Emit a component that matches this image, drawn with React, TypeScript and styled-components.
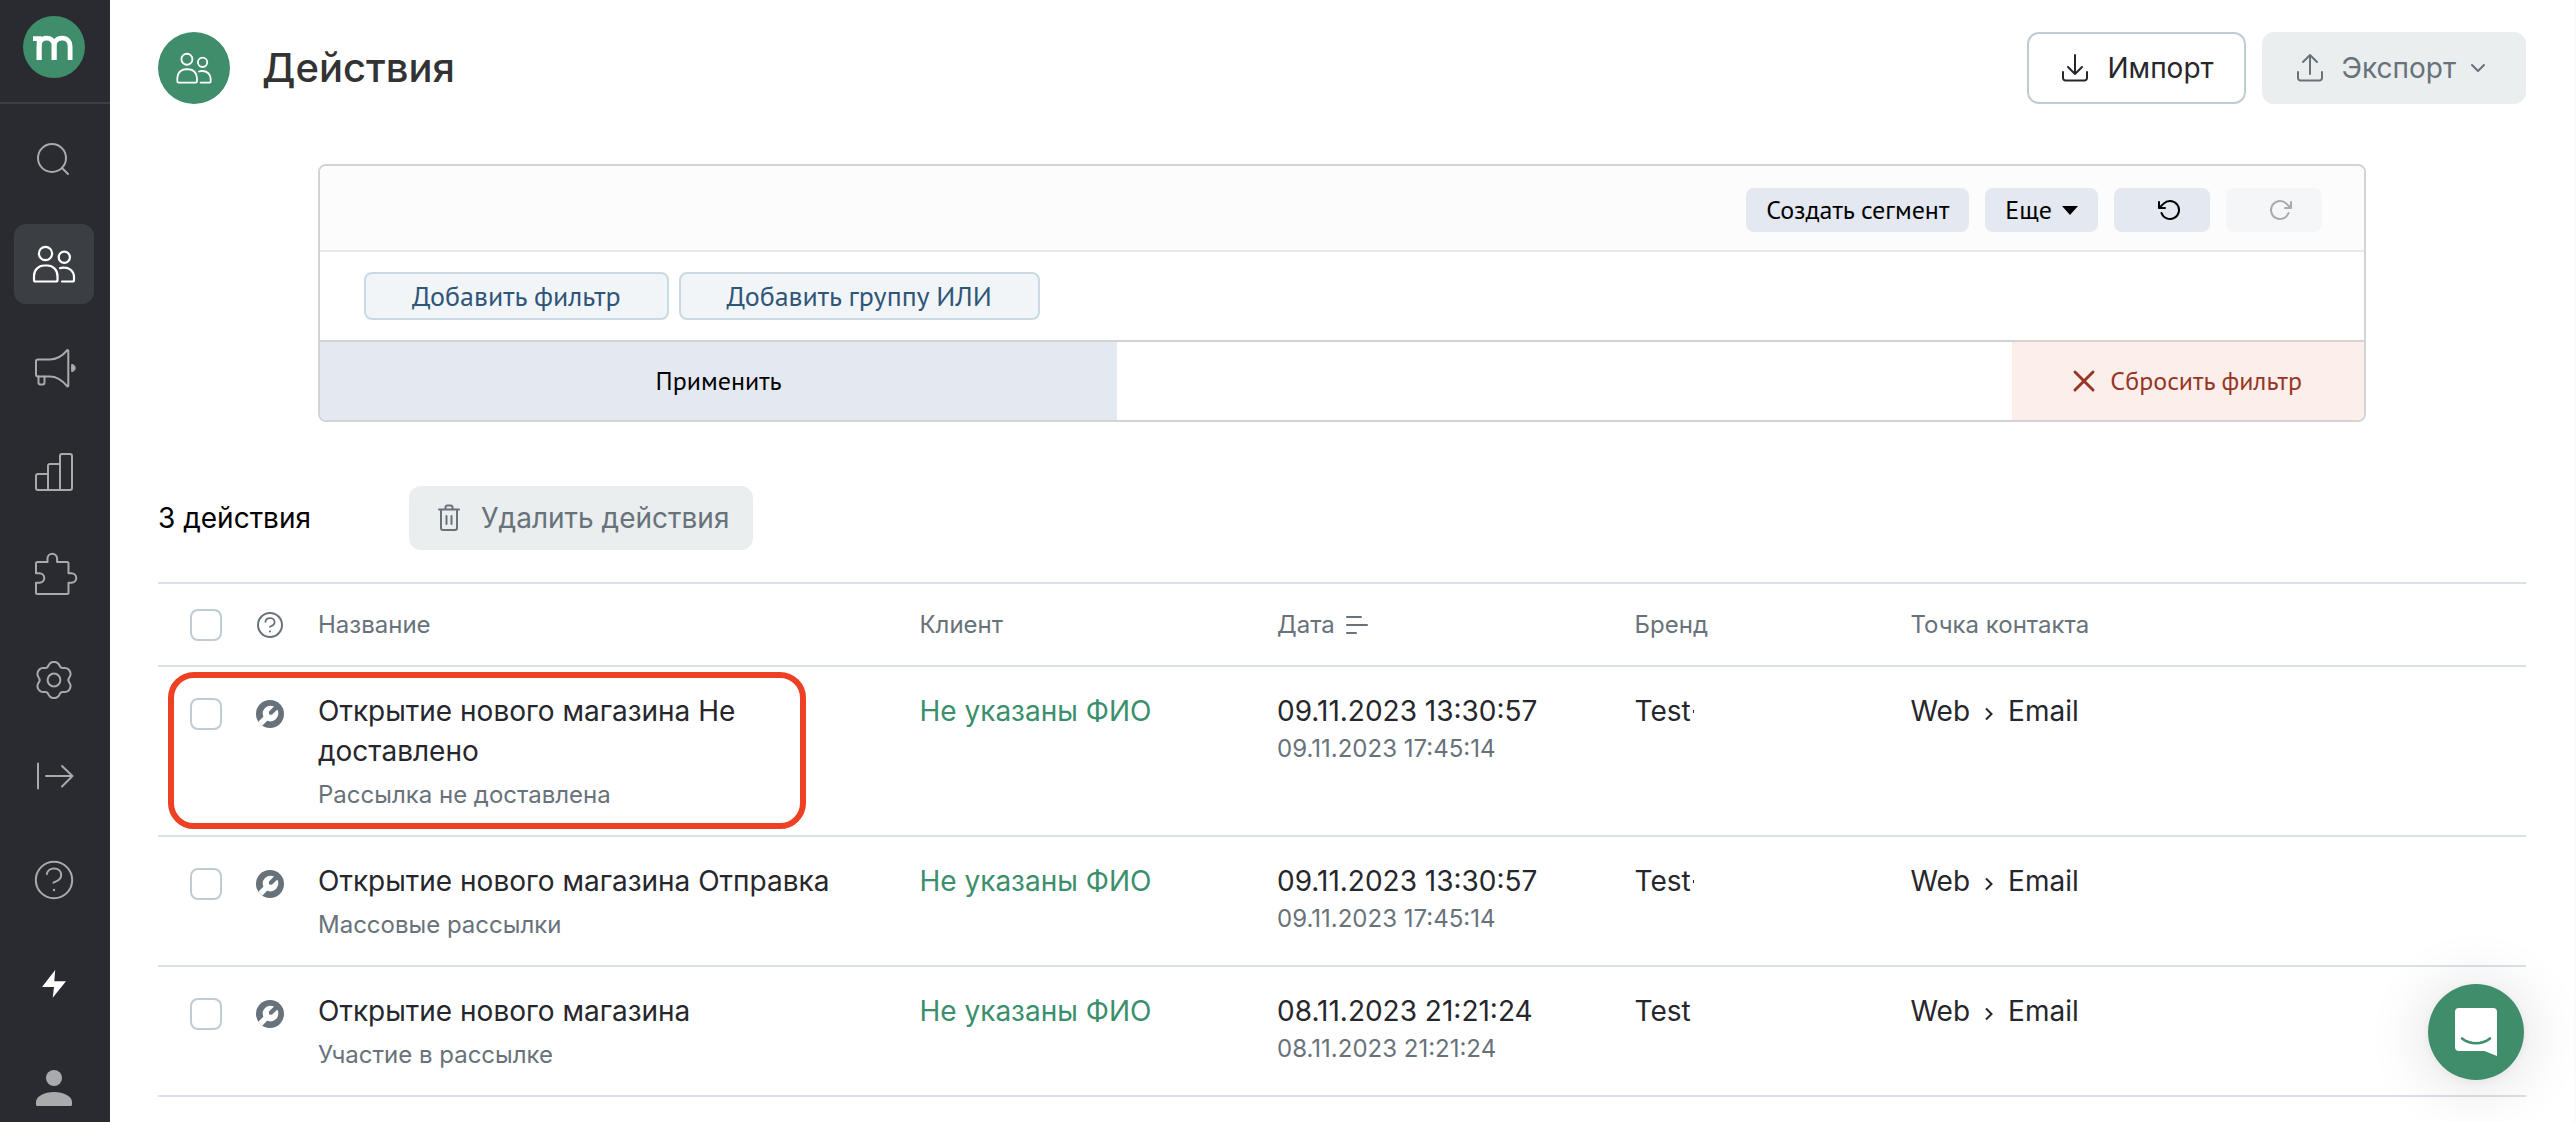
import React from "react";
import styled, { createGlobalStyle, css } from "styled-components";

const color = {
  green: "#408d6c",
  dark: "#2a2b30",
  darkActive: "#3b3e43",
  ink: "#26272c",
  muted: "#68727a",
  line: "#dbe1e6",
  control: "#c0ccd4",
  disabled: "#eaeeef",
  panelLine: "#d3d3d3",
  panelButton: "#e4e8f0",
};

const inter = `Inter, "Liberation Sans", sans-serif`;
const ptSans = `"PT Sans", "Noto Sans", sans-serif`;

const GlobalStyle = createGlobalStyle`
  *, *::before, *::after { box-sizing: border-box; }
  body {
    margin: 0;
    background: #fff;
    color: ${color.ink};
    font-family: ${inter};
    font-size: 28px;
    line-height: 40px;
  }
  button { font: inherit; margin: 0; cursor: pointer; }
  button:disabled { cursor: default; }
  svg { display: block; flex: none; }
`;

const Layout = styled.div`
  display: flex;
  height: 100vh;
  overflow: hidden;
`;

/* ---------- sidebar ---------- */

const Sidebar = styled.aside`
  flex: none;
  width: 110px;
  height: 100%;
  overflow: hidden;
  background: ${color.dark};
`;

const LogoArea = styled.div`
  padding: 16px 24px 24px 23px;
  border-bottom: 2px solid ${color.darkActive};
`;

const NavGroup = styled.nav`
  display: flex;
  flex-direction: column;
  gap: 24px;
  padding: 16px 16px 0 14px;
`;

const NavButton = styled.button<{ $active?: boolean; $bright?: boolean }>`
  display: flex;
  align-items: center;
  justify-content: center;
  width: 80px;
  height: 80px;
  padding: 0;
  border: 0;
  border-radius: 12px;
  background: ${(p) => (p.$active ? color.darkActive : "transparent")};
  color: ${(p) => (p.$active || p.$bright ? "#fff" : "#a9aaac")};
`;

/* ---------- page ---------- */

const Page = styled.main`
  flex: 1;
  min-width: 0;
  height: 100%;
  overflow: hidden;
  padding: 32px 48px 0;
  border-right: 2px solid #fafafa;
`;

const PageHeader = styled.header`
  display: flex;
  align-items: center;
`;

const HeaderBadge = styled.span`
  display: flex;
  align-items: center;
  justify-content: center;
  width: 72px;
  height: 72px;
  border-radius: 50%;
  background: ${color.green};
  color: #fff;
`;

const Title = styled.h1`
  margin: 0 auto 0 32px;
  color: #333;
  font-size: 40px;
  font-weight: 500;
  line-height: 48px;
`;

const HeaderActions = styled.div`
  display: flex;
  gap: 16px;
`;

const ActionButton = styled.button<{ $compact?: boolean }>`
  display: flex;
  align-items: center;
  gap: 6px;
  height: ${(p) => (p.$compact ? 64 : 72)}px;
  padding: 0 ${(p) => (p.$compact ? 22 : 30)}px;
  border: 2px solid ${color.control};
  border-radius: 12px;
  background: #fff;
  color: ${color.ink};
  &:disabled {
    border-color: transparent;
    background: ${color.disabled};
    background-clip: border-box;
    color: ${color.muted};
  }
`;

const IconLabel = styled.span`
  display: flex;
  align-items: center;
  gap: 16px;
`;

/* ---------- filter panel ---------- */

const FilterPanel = styled.section`
  margin: 60px 160px 0;
  border: 2px solid ${color.panelLine};
  border-radius: 8px;
  overflow: hidden;
  font-family: ${ptSans};
  font-size: 26px;
  line-height: 32px;
`;

const FilterToolbar = styled.div`
  display: flex;
  justify-content: flex-end;
  gap: 16px;
  padding: 22px 42px 18px;
  border-bottom: 2px solid ${color.panelButton};
  background: #fcfcfc;
`;

const toolButton = css`
  display: flex;
  align-items: center;
  height: 44px;
  border: 0;
  border-radius: 8px;
  background: ${color.panelButton};
  color: #000;
`;

const ToolButton = styled.button`
  ${toolButton}
  gap: 10px;
  padding: 0 20px;
`;

const HistoryButton = styled.button`
  ${toolButton}
  padding: 0 28px 0 44px;
  &:disabled {
    background: #f5f6f8;
    color: #aaa;
  }
`;

const FilterBody = styled.div`
  display: flex;
  gap: 10px;
  padding: 20px 44px;
  border-bottom: 2px solid ${color.panelLine};
`;

const AddButton = styled.button`
  height: 48px;
  padding: 0 46px;
  border: 2px solid #c9dae4;
  border-radius: 8px;
  background: #f1f5f8;
  color: #2f5579;
  font-size: 28px;
`;

const FilterFooter = styled.div`
  display: flex;
  justify-content: space-between;
`;

const ApplyButton = styled.button`
  width: 39%;
  height: 78px;
  border: 0;
  background: ${color.panelButton};
  color: #000;
`;

const ResetButton = styled.button`
  display: flex;
  align-items: center;
  gap: 14px;
  height: 78px;
  padding: 0 62px 0 60px;
  border: 0;
  background: #fceeeb;
  color: #963624;
`;

/* ---------- list ---------- */

const ListToolbar = styled.div`
  display: flex;
  align-items: center;
  gap: 98px;
  margin: 64px 0 32px;
`;

const Count = styled.span`
  color: #000;
`;

const ActionsTable = styled.table`
  width: 100%;
  table-layout: fixed;
  border-collapse: separate;
  border-spacing: 0;
`;

const Col = styled.col<{ $width?: string }>`
  width: ${(p) => p.$width ?? "auto"};
`;

const HeadCell = styled.th`
  height: 83px;
  padding: 0;
  border-top: 2px solid ${color.line};
  color: ${color.muted};
  font-size: 24px;
  font-weight: 400;
  line-height: 32px;
  text-align: left;
  vertical-align: middle;
`;

const HeadLabel = styled.span`
  display: flex;
  align-items: center;
  gap: 10px;
`;

const Row = styled.tr`
  position: relative;
  &:last-child > td {
    border-bottom: 2px solid ${color.line};
  }
`;

const Cell = styled.td`
  padding: 24px 40px 24px 0;
  border-top: 2px solid ${color.line};
  vertical-align: top;
`;

const TightCell = styled(Cell)`
  padding-right: 0;
`;

const ControlBox = styled.div<{ $indent?: boolean }>`
  display: flex;
  align-items: center;
  height: 46px;
  padding-left: ${(p) => (p.$indent ? 32 : 0)}px;
`;

const Checkbox = styled.input`
  appearance: none;
  width: 32px;
  height: 32px;
  margin: 0;
  border: 2px solid ${color.control};
  border-radius: 8px;
  background: #fff;
  &:checked {
    border-color: ${color.green};
    background: ${color.green};
  }
`;

const Name = styled.div`
  margin-bottom: 8px;
`;

const DateValue = styled.div`
  margin-bottom: 2px;
`;

const Sub = styled.div`
  color: ${color.muted};
  font-size: 24px;
  line-height: 32px;
`;

const ClientLink = styled.a`
  color: #3b8f6c;
  text-decoration: none;
`;

const Brand = styled.span<{ $clipped?: boolean }>`
  display: flex;
  align-items: center;
  gap: 2px;
  ${(p) =>
    p.$clipped &&
    css`
      &::after {
        content: "";
        width: 1px;
        height: 3px;
        background: ${color.ink};
      }
    `}
`;

const TouchPoint = styled.span`
  display: flex;
  align-items: center;
  gap: 14px;
`;

const Highlight = styled.span`
  position: absolute;
  top: 7px;
  bottom: 6px;
  left: 10px;
  width: 638px;
  border: 6px solid #ee4023;
  border-radius: 26px;
  pointer-events: none;
`;

const ChatButton = styled.button`
  position: fixed;
  right: 52px;
  bottom: 42px;
  width: 96px;
  height: 96px;
  padding: 0;
  border: 0;
  border-radius: 50%;
  background: ${color.green};
  box-shadow: 0 2px 12px rgba(0, 0, 0, 0.06), 0 4px 64px rgba(0, 0, 0, 0.14);
`;

/* ---------- icons ---------- */

const NavIcon = ({ children, size = 48 }: { children: React.ReactNode; size?: number }) => (
  <svg
    width={size}
    height={size}
    viewBox="0 0 48 48"
    fill="none"
    stroke="currentColor"
    strokeWidth="2"
    strokeLinecap="round"
    strokeLinejoin="round"
    aria-hidden="true"
  >
    {children}
  </svg>
);

const PeopleShape = () => (
  <g strokeWidth="2.2">
    <circle cx="15.5" cy="13.5" r="6.6" />
    <path d="M5.5 41.5H26a1.5 1.5 0 0 0 1.5-1.5v-4c0-6-4.5-10.5-10-10.5H14C8.5 25.5 4 30 4 36v4a1.5 1.5 0 0 0 1.5 1.5z" />
    <circle cx="34.3" cy="17.2" r="5.6" />
    <path d="M30 28.2c1-.4 2-.6 3-.6h1c5.8 0 10 4 10 9.4v3a1.5 1.5 0 0 1-1.5 1.5H32" />
  </g>
);

const gearPath =
  Array.from({ length: 120 }, (_, i) => {
    const a = (i / 120) * Math.PI * 2;
    const r = 16.5 + 1.9 * Math.cos(6 * a) - 0.3 * Math.cos(12 * a);
    const x = 24 + r * Math.sin(a);
    const y = 24 - r * Math.cos(a);
    return `${i ? "L" : "M"}${x.toFixed(2)} ${y.toFixed(2)}`;
  }).join("") + "Z";

const mainNav = [
  {
    label: "Поиск",
    icon: (
      <>
        <circle cx="22" cy="22" r="14" />
        <path d="M32 32l6 6" />
      </>
    ),
  },
  { label: "Клиенты", active: true, icon: <PeopleShape /> },
  {
    label: "Кампании",
    icon: (
      <>
        <path d="M8 15.5h12c8 0 14-5.5 17-9a.7.7 0 0 1 1.3.5v34.5a.7.7 0 0 1-1.3.5c-3-3.5-9-9.5-17-9.5H8a2 2 0 0 1-2-2v-13a2 2 0 0 1 2-2z" />
        <path d="M8.5 32.5v6a2 2 0 0 0 2 2h2a2 2 0 0 0 2-2v-6" />
        <path d="M42 20.5c1.8 0 3.2 1.5 3.2 3.5s-1.4 3.5-3.2 3.5z" fill="currentColor" strokeWidth="1" />
      </>
    ),
  },
  {
    label: "Отчеты",
    icon: (
      <path d="M18 42V18a2 2 0 0 1 2-2h10M30 42V8a2 2 0 0 1 2-2h8a2 2 0 0 1 2 2v32a2 2 0 0 1-2 2H8a2 2 0 0 1-2-2V28a2 2 0 0 1 2-2h10" />
    ),
  },
  {
    label: "Интеграции",
    icon: (
      <path d="M7.5 10h10V6.5a4.8 4.8 0 0 1 9.6 0V10h9.9a1.5 1.5 0 0 1 1.5 1.5v9.7h3a4.8 4.8 0 0 1 0 9.6h-3v9.7A1.5 1.5 0 0 1 37 42H7.5A1.5 1.5 0 0 1 6 40.5v-9.7h3.5a4.8 4.8 0 0 0 0-9.6H6v-9.7A1.5 1.5 0 0 1 7.5 10z" />
    ),
  },
  {
    label: "Настройки",
    icon: (
      <>
        <path d={gearPath} />
        <circle cx="24" cy="24" r="6.4" />
      </>
    ),
  },
];

const extraNav = [
  { label: "Развернуть меню", icon: <path d="M8 11.5v25M16 24h26M32 14l10.5 10L32 34.5" /> },
  {
    label: "Помощь",
    icon: (
      <>
        <circle cx="24" cy="24" r="18.2" />
        <path d="M16.8 18c.5-3.4 3.6-5.6 7.2-5.6 4.2 0 7.2 2.7 7.2 6.5 0 4.4-3.7 5.8-7.7 7.800" />
        <circle cx="24" cy="34" r="1.2" fill="currentColor" stroke="none" />
      </>
    ),
  },
  {
    label: "Быстрые действия",
    bright: true,
    icon: <path d="M25.2 10L12 27h12L22.7 37.7 36 21.2H24.3z" fill="currentColor" stroke="none" />,
  },
  {
    label: "Профиль",
    icon: (
      <g fill="currentColor" stroke="none">
        <circle cx="24" cy="14" r="8" />
        <path d="M6 40.5V38c0-5.5 8-10 18-10s18 4.5 18 10v2.5a1.5 1.5 0 0 1-1.5 1.5h-33A1.5 1.5 0 0 1 6 40.5z" />
      </g>
    ),
  },
];

const Logo = () => (
  <svg width="62" height="62" viewBox="0 0 62 62" role="img" aria-label="mindbox">
    <circle cx="31" cy="31" r="31" fill={color.green} />
    <g fill="none" stroke="#fff" strokeWidth="4.8">
      <path d="M10 22.600h6.100V44" />
      <path d="M16.1 44V30.500c0-5 2.700-8.300 7.500-8.300s7.500 3.200 7.500 8V44" />
      <path d="M31.1 44V30.500c0-5 3-8.300 8-8.300s8 3.200 8 8V44" />
    </g>
  </svg>
);

const LineIcon = ({ children }: { children: React.ReactNode }) => (
  <svg
    width="32"
    height="32"
    viewBox="0 0 32 32"
    fill="none"
    stroke="currentColor"
    strokeWidth="2"
    strokeLinecap="round"
    strokeLinejoin="round"
    aria-hidden="true"
  >
    {children}
  </svg>
);

const Tray = () => <path d="M4 20v6a2.5 2.5 0 0 0 2.5 2.5h19A2.5 2.5 0 0 0 28 26v-6" />;

const WrenchIcon = () => (
  <svg width="28" height="28" viewBox="0 0 28 28" role="img" aria-label="Системное действие">
    <defs>
      <clipPath id="wrench-round">
        <circle cx="14" cy="14" r="14" />
      </clipPath>
    </defs>
    <g clipPath="url(#wrench-round)">
      <rect width="28" height="28" fill={color.muted} />
      <circle cx="14.5" cy="13.6" r="7.8" fill="#fff" />
      <path d="M10 18L3 25" stroke="#fff" strokeWidth="5.5" />
      <path d="M12.800 11.700l4.400-4.400 2.300-3 3.800 3.800-3 2.300-4.400 4.400-2.700-.4z" fill={color.muted} />
    </g>
  </svg>
);

const QuestionIcon = () => (
  <svg
    width="28"
    height="28"
    viewBox="0 0 28 28"
    fill="none"
    stroke="currentColor"
    strokeWidth="2"
    strokeLinecap="round"
    role="img"
    aria-label="Тип действия"
  >
    <circle cx="14" cy="14" r="12" />
    <path d="M9.4 10.8c.3-2.2 2.2-3.6 4.6-3.6 2.6 0 4.6 1.6 4.6 4s-2 3.4-4.6 4.6" strokeWidth="1.8" />
    <circle cx="14" cy="20.5" r="1.1" fill="currentColor" stroke="none" />
  </svg>
);

/* ---------- data ---------- */

const rows = [
  {
    name: "Открытие нового магазина Не доставлено",
    kind: "Рассылка не доставлена",
    date: "09.11.2023 13:30:57",
    created: "09.11.2023 17:45:14",
    clipped: true,
    highlighted: true,
  },
  {
    name: "Открытие нового магазина Отправка",
    kind: "Массовые рассылки",
    date: "09.11.2023 13:30:57",
    created: "09.11.2023 17:45:14",
    clipped: true,
    highlighted: false,
  },
  {
    name: "Открытие нового магазина",
    kind: "Участие в рассылке",
    date: "08.11.2023 21:21:24",
    created: "08.11.2023 21:21:24",
    clipped: false,
    highlighted: false,
  },
];

export default function App() {
  return (
    <>
      <GlobalStyle />
      <Layout>
        <Sidebar>
          <LogoArea>
            <Logo />
          </LogoArea>
          <NavGroup aria-label="Основное меню">
            {mainNav.map((item) => (
              <NavButton key={item.label} $active={item.active} aria-label={item.label}>
                <NavIcon>{item.icon}</NavIcon>
              </NavButton>
            ))}
          </NavGroup>
          <NavGroup aria-label="Дополнительное меню">
            {extraNav.map((item) => (
              <NavButton key={item.label} $bright={item.bright} aria-label={item.label}>
                <NavIcon>{item.icon}</NavIcon>
              </NavButton>
            ))}
          </NavGroup>
        </Sidebar>

        <Page>
          <PageHeader>
            <HeaderBadge>
              <NavIcon size={40}>
                <PeopleShape />
              </NavIcon>
            </HeaderBadge>
            <Title>Действия</Title>
            <HeaderActions>
              <ActionButton>
                <IconLabel>
                  <LineIcon>
                    <Tray />
                    <path d="M16 3v19M9 15l7 7 7-7" />
                  </LineIcon>
                  Импорт
                </IconLabel>
              </ActionButton>
              <ActionButton disabled>
                <IconLabel>
                  <LineIcon>
                    <Tray />
                    <path d="M16 22V3M9 10l7-7 7 7" />
                  </LineIcon>
                  Экспорт
                </IconLabel>
                <LineIcon>
                  <path d="M10 13l6 6 6-6" />
                </LineIcon>
              </ActionButton>
            </HeaderActions>
          </PageHeader>

          <FilterPanel>
            <FilterToolbar>
              <ToolButton>Создать сегмент</ToolButton>
              <ToolButton>
                Еще
                <svg width="16" height="9" viewBox="0 0 16 9" aria-hidden="true">
                  <path d="M0 0h16L8 9z" fill="currentColor" />
                </svg>
              </ToolButton>
              <HistoryButton aria-label="Отменить">
                <svg width="24" height="24" viewBox="0 0 24 24" fill="none" stroke="currentColor" strokeWidth="2" strokeLinecap="round" strokeLinejoin="round">
                  <path d="M1 4v6h6M3.51 15a9 9 0 1 0 2.13-9.36L1 10" />
                </svg>
              </HistoryButton>
              <HistoryButton aria-label="Повторить" disabled>
                <svg width="24" height="24" viewBox="2 0 24 24" fill="none" stroke="currentColor" strokeWidth="2" strokeLinecap="round" strokeLinejoin="round">
                  <path d="M23 4v6h-6M20.49 15a9 9 0 1 1-2.12-9.36L23 10" />
                </svg>
              </HistoryButton>
            </FilterToolbar>
            <FilterBody>
              <AddButton>Добавить фильтр</AddButton>
              <AddButton>Добавить группу ИЛИ</AddButton>
            </FilterBody>
            <FilterFooter>
              <ApplyButton>Применить</ApplyButton>
              <ResetButton>
                <svg width="24" height="24" viewBox="0 0 24 24" fill="none" stroke="currentColor" strokeWidth="3" strokeLinecap="round" aria-hidden="true">
                  <path d="M3 3l18 18M21 3L3 21" />
                </svg>
                Сбросить фильтр
              </ResetButton>
            </FilterFooter>
          </FilterPanel>

          <ListToolbar>
            <Count>3 действия</Count>
            <ActionButton $compact disabled>
              <IconLabel>
                <LineIcon>
                  <path d="M6 7.5h20M8 7.5V26a2 2 0 0 0 2 2h12a2 2 0 0 0 2-2V7.5M12.500 7V5.500a2 2 0 0 1 2-2h3a2 2 0 0 1 2 2V7M13.500 14v8M18.500 14v8" />
                </LineIcon>
                Удалить действия
              </IconLabel>
            </ActionButton>
          </ListToolbar>

          <ActionsTable>
            <colgroup>
              <Col $width="98px" />
              <Col $width="62px" />
              <Col $width="25.4%" />
              <Col $width="15.1%" />
              <Col $width="15.1%" />
              <Col $width="11.65%" />
              <Col />
            </colgroup>
            <thead>
              <tr>
                <HeadCell>
                  <ControlBox $indent>
                    <Checkbox type="checkbox" aria-label="Выбрать все" />
                  </ControlBox>
                </HeadCell>
                <HeadCell>
                  <QuestionIcon />
                </HeadCell>
                <HeadCell>Название</HeadCell>
                <HeadCell>Клиент</HeadCell>
                <HeadCell>
                  <HeadLabel>
                    Дата
                    <svg width="24" height="20" viewBox="0 0 24 20" fill="none" stroke="currentColor" strokeWidth="2" strokeLinecap="round" aria-hidden="true">
                      <path d="M2 2h14M2 10h20M2 18h9" />
                    </svg>
                  </HeadLabel>
                </HeadCell>
                <HeadCell>Бренд</HeadCell>
                <HeadCell>Точка контакта</HeadCell>
              </tr>
            </thead>
            <tbody>
              {rows.map((row) => (
                <Row key={row.name}>
                  <TightCell>
                    <ControlBox $indent>
                      <Checkbox type="checkbox" aria-label={row.name} />
                    </ControlBox>
                    {row.highlighted && <Highlight />}
                  </TightCell>
                  <TightCell>
                    <ControlBox>
                      <WrenchIcon />
                    </ControlBox>
                  </TightCell>
                  <Cell>
                    <Name>{row.name}</Name>
                    <Sub>{row.kind}</Sub>
                  </Cell>
                  <Cell>
                    <ClientLink href="#client">Не указаны ФИО</ClientLink>
                  </Cell>
                  <Cell>
                    <DateValue>{row.date}</DateValue>
                    <Sub>{row.created}</Sub>
                  </Cell>
                  <Cell>
                    <Brand $clipped={row.clipped}>Test</Brand>
                  </Cell>
                  <Cell>
                    <TouchPoint>
                      Web
                      <svg width="10" height="20" viewBox="0 0 10 20" fill="none" stroke="currentColor" strokeWidth="2" aria-hidden="true">
                        <path d="M2 7.5l5.5 5.5L2 18.5" />
                      </svg>
                      Email
                    </TouchPoint>
                  </Cell>
                </Row>
              ))}
            </tbody>
          </ActionsTable>
        </Page>
      </Layout>

      <ChatButton aria-label="Открыть чат">
        <svg width="96" height="96" viewBox="0 0 96 96" aria-hidden="true">
          <path d="M31 24h34a4 4 0 0 1 4 4v44l-12.5-5H31a4 4 0 0 1-4-4V28a4 4 0 0 1 4-4z" fill="#fff" />
          <path d="M34 54.5c8 6.3 20 6.3 28 0" fill="none" stroke={color.green} strokeWidth="2.6" strokeLinecap="round" />
        </svg>
      </ChatButton>
    </>
  );
}
